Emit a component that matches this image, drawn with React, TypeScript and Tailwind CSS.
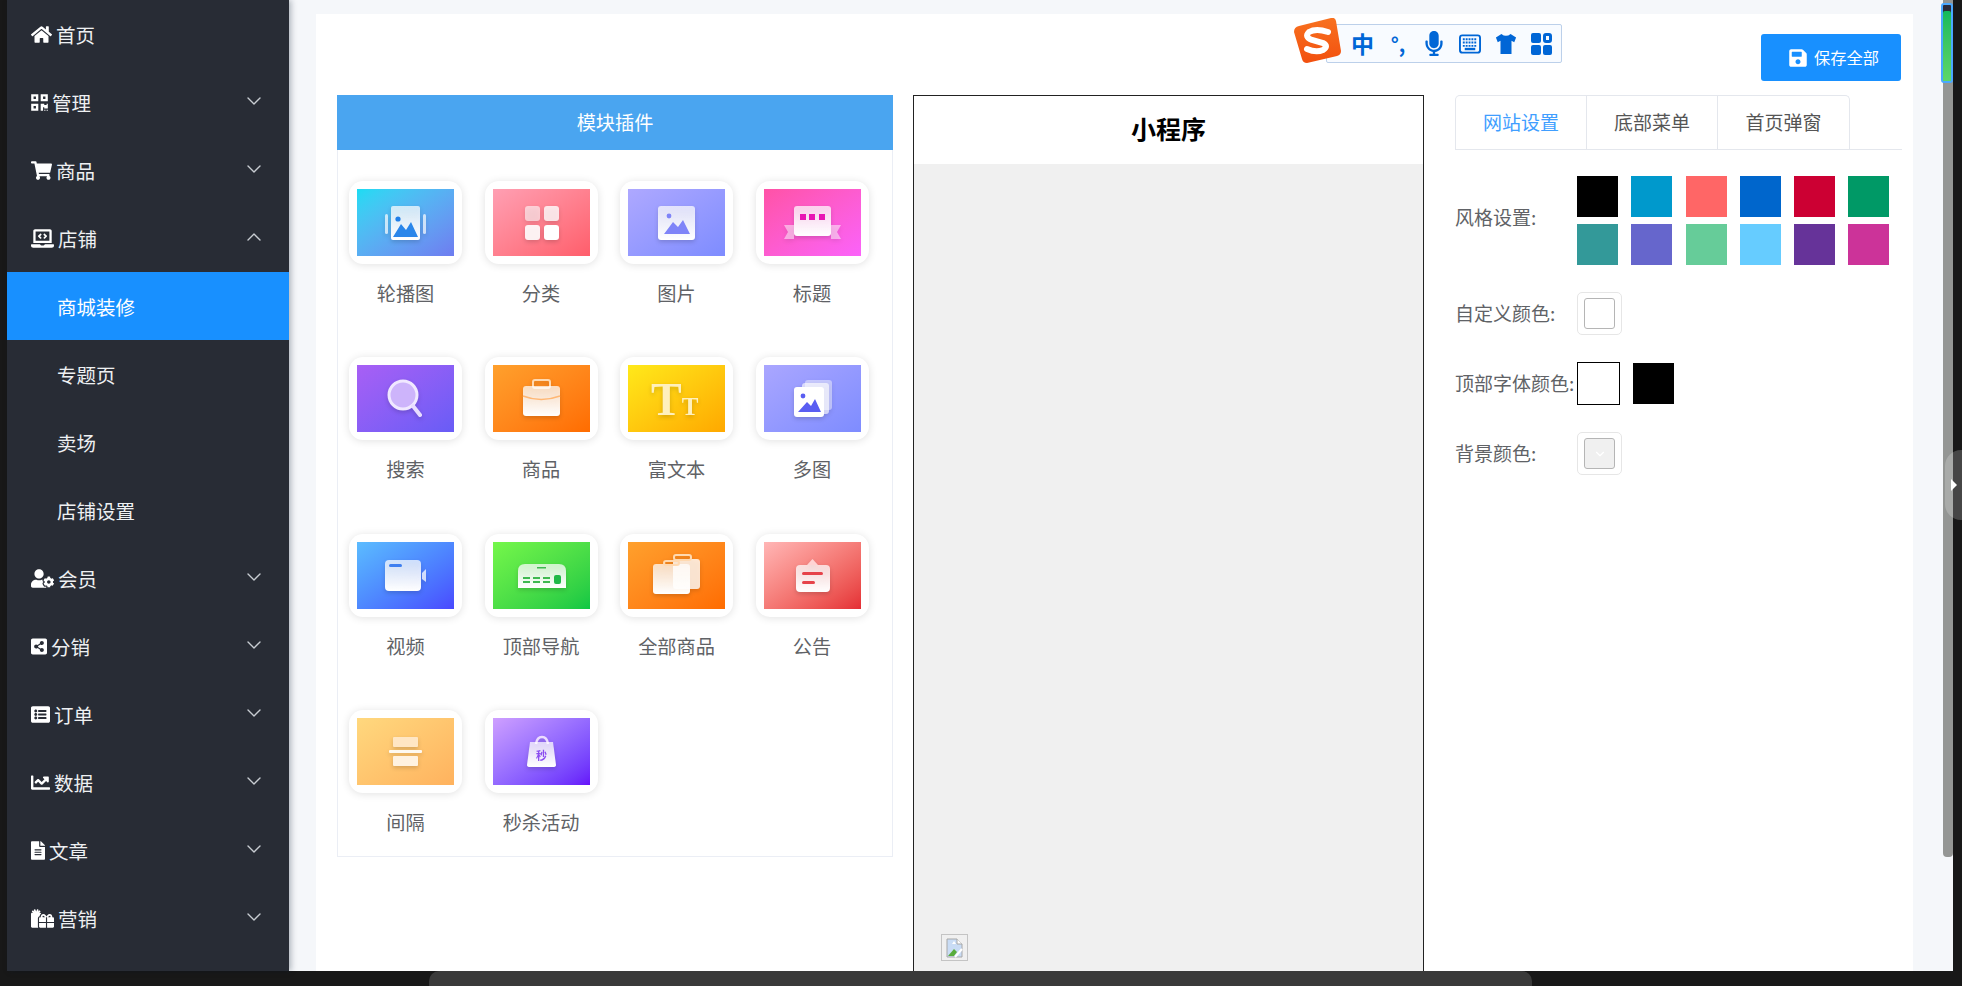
import { ReactNode } from 'react'
import { ChevronDown, ChevronUp } from 'lucide-react'
import {
  FaChartLine,
  FaFileAlt,
  FaGifts,
  FaHome,
  FaLaptopCode,
  FaListAlt,
  FaMicrophone,
  FaQrcode,
  FaSave,
  FaShareAltSquare,
  FaShoppingCart,
  FaUserCog,
} from 'react-icons/fa'

const navBottom = [
  { label: '会员', icon: FaUserCog, w: 'w-[23px]' },
  { label: '分销', icon: FaShareAltSquare, w: 'w-[16px]' },
  { label: '订单', icon: FaListAlt, w: 'w-[19px]' },
  { label: '数据', icon: FaChartLine, w: 'w-[19px]' },
  { label: '文章', icon: FaFileAlt, w: 'w-[14px]' },
  { label: '营销', icon: FaGifts, w: 'w-[23px]' },
]

const NavRow = ({ label, icon: Icon, w, arrow = true, open = false }: any) => (
  <div className="h-[68px] flex items-center pl-[24px] pr-[23px] text-[19.5px] text-[#eef0f2]">
    <Icon className={`h-[19px] shrink-0 text-white ${w}`} />
    <span className="ml-[4px] pt-[1px] flex-1">{label}</span>
    {arrow && (open
      ? <ChevronUp size={24} strokeWidth={1.4} className="mb-[2px] text-[#c8ccd2]" />
      : <ChevronDown size={24} strokeWidth={1.4} className="mb-[2px] text-[#c8ccd2]" />)}
  </div>
)

const SubRow = ({ label, active = false }: { label: string; active?: boolean }) => (
  <div className={`h-[68px] flex items-center pl-[50px] pt-[1px] text-[19.5px] text-[#eef0f2] ${active ? 'bg-[#1890ff] text-white' : ''}`}>
    {label}
  </div>
)

const Sidebar = () => (
  <aside className="w-[282px] shrink-0 bg-[#282c35] relative z-10 shadow-[2px_0_6px_rgba(0,21,41,0.3)]">
    <NavRow label="首页" icon={FaHome} w="w-[21px]" arrow={false} />
    <NavRow label="管理" icon={FaQrcode} w="w-[17px]" />
    <NavRow label="商品" icon={FaShoppingCart} w="w-[21px]" />
    <NavRow label="店铺" icon={FaLaptopCode} w="w-[23px]" open />
    <SubRow label="商城装修" active />
    <SubRow label="专题页" />
    <SubRow label="卖场" />
    <SubRow label="店铺设置" />
    {navBottom.map(item => <NavRow key={item.label} {...item} />)}
  </aside>
)

// the plugin tile drawings, all in a 97x67 box
const W = 'url(#tile-w)'
const icons: Record<string, ReactNode> = {
  轮播图: (
    <>
      <rect x="28" y="25" width="3" height="20" rx="1.5" fill="#fff" opacity=".7" />
      <rect x="66" y="25" width="3" height="20" rx="1.5" fill="#fff" opacity=".7" />
      <rect x="34" y="17" width="29" height="34" rx="2" fill={W} />
      <circle cx="41" cy="30" r="2.6" fill="#1f7fe8" />
      <path d="M36 48 L44 35 L49 41 L54 33 L61 48 Z" fill="#2a86ea" />
    </>
  ),
  分类: (
    <>
      <rect x="32" y="17" width="15" height="15" rx="3" fill="#fff" opacity=".6" />
      <rect x="51" y="17" width="15" height="15" rx="3" fill="#fff" opacity=".8" />
      <rect x="32" y="36" width="15" height="15" rx="3" fill="#fff" opacity=".9" />
      <rect x="51" y="36" width="15" height="15" rx="3" fill="#fff" />
    </>
  ),
  图片: (
    <>
      <rect x="30" y="17" width="37" height="34" rx="3" fill={W} />
      <circle cx="41" cy="27" r="2.4" fill="#7f84f8" />
      <path d="M36 45 L45 33 L50 38 L55 31 L62 45 Z" fill="#7f84f8" />
    </>
  ),
  标题: (
    <>
      <path d="M20 36 L30 36 L30 50 L20 50 L24 43 Z" fill="#fff" opacity=".5" />
      <path d="M77 36 L67 36 L67 50 L77 50 L73 43 Z" fill="#fff" opacity=".5" />
      <rect x="30" y="17" width="37" height="30" rx="3" fill={W} />
      <rect x="36" y="25" width="6" height="6" fill="#e815b4" />
      <rect x="45" y="25" width="6" height="6" fill="#e815b4" />
      <rect x="55" y="25" width="6" height="6" fill="#e815b4" />
    </>
  ),
  搜索: (
    <>
      <circle cx="46" cy="30" r="14" fill="#cdb4fb" stroke="#f0e8ff" strokeWidth="3" />
      <path d="M56 41 L63 50" stroke="#e8dcff" strokeWidth="4" strokeLinecap="round" />
    </>
  ),
  商品: (
    <>
      <rect x="40" y="15" width="17" height="8" rx="2" fill="none" stroke="#ffd9b0" strokeWidth="2" />
      <rect x="30" y="21" width="37" height="30" rx="3" fill={W} />
      <path d="M30 31 Q48 38 67 31" fill="none" stroke="#ffb774" strokeWidth="1.5" />
    </>
  ),
  富文本: (
    <text x="23" y="50" fontFamily="'Liberation Serif', serif" fontWeight="700" fill="#fff0bd">
      <tspan fontSize="46">T</tspan>
      <tspan fontSize="25">T</tspan>
    </text>
  ),
  多图: (
    <>
      <rect x="41" y="15" width="27" height="30" rx="3" fill="#fff" opacity=".45" />
      <rect x="38" y="18" width="27" height="31" rx="3" fill="#fff" opacity=".65" />
      <rect x="30" y="22" width="30" height="30" rx="3" fill="#fff" />
      <circle cx="39" cy="31" r="2.4" fill="#5a5ef2" />
      <path d="M34 47 L43 37 L47 41 L51 34 L57 47 Z" fill="#5a5ef2" />
    </>
  ),
  视频: (
    <>
      <rect x="28" y="18" width="36" height="31" rx="4" fill={W} />
      <rect x="32" y="22" width="13" height="3" rx="1.5" fill="#3e7ff0" />
      <path d="M65 31 L69 27 L69 40 L65 37 Z" fill="#fff" opacity=".75" />
    </>
  ),
  顶部导航: (
    <>
      <path d="M25 46 L25 29 Q25 22 32 22 L66 22 Q73 22 73 29 L73 46 Z" fill={W} />
      <rect x="44" y="25" width="9" height="1.5" fill="#3eb84f" />
      <rect x="30" y="35" width="7" height="2" fill="#3eb84f" />
      <rect x="30" y="39" width="7" height="2" fill="#3eb84f" />
      <rect x="40" y="35" width="7" height="2" fill="#3eb84f" />
      <rect x="40" y="39" width="7" height="2" fill="#3eb84f" />
      <rect x="50" y="35" width="7" height="2" fill="#3eb84f" />
      <rect x="50" y="39" width="7" height="2" fill="#3eb84f" />
      <rect x="61" y="33" width="7" height="9" rx="2" fill="#1fb847" />
    </>
  ),
  全部商品: (
    <>
      <rect x="45" y="17" width="27" height="30" rx="3" fill="#fff" opacity=".8" />
      <rect x="46" y="13" width="17" height="5" rx="2" fill="none" stroke="#ffd9b0" strokeWidth="2" />
      <rect x="25" y="22" width="37" height="30" rx="3" fill={W} />
      <rect x="36" y="19" width="15" height="4" rx="2" fill="none" stroke="#ffd9b0" strokeWidth="2" />
    </>
  ),
  公告: (
    <>
      <path d="M43 23 L48.5 17 L54 23 Z" fill="#ffd3d3" />
      <rect x="32" y="23" width="34" height="27" rx="4" fill={W} />
      <rect x="38" y="30" width="21" height="3" rx="1.5" fill="#e6434a" />
      <rect x="38" y="39" width="13" height="3" rx="1.5" fill="#e6434a" />
    </>
  ),
  间隔: (
    <>
      <rect x="36" y="19" width="25" height="10" rx="1" fill="#ffe6c4" />
      <rect x="32" y="32" width="33" height="3" rx="1" fill="#fff" opacity=".9" />
      <rect x="36" y="38" width="25" height="10" rx="1" fill="#fff2e0" />
    </>
  ),
  秒杀活动: (
    <>
      <path d="M43 26 Q44 19 49 19 Q54 19 55 26" fill="none" stroke="#ecdcff" strokeWidth="2.5" />
      <path d="M37 24 L60 24 L63 47 Q63 49 60 49 L37 49 Q34 49 34 47 Z" fill={W} />
      <text x="48.5" y="42" textAnchor="middle" fontSize="11" fontWeight="700" fill="#8a4cf0" fontFamily="'Noto Sans CJK SC', sans-serif">秒</text>
    </>
  ),
}

const plugins = [
  { label: '轮播图', bg: 'from-[#17dcf3] to-[#6e7cf0]' },
  { label: '分类', bg: 'from-[#ff9fb3] to-[#ff5d6b]' },
  { label: '图片', bg: 'from-[#aea8ff] to-[#7e8cff]' },
  { label: '标题', bg: 'from-[#ff52a6] to-[#fb62fa]' },
  { label: '搜索', bg: 'from-[#a85ff5] to-[#685cf6]' },
  { label: '商品', bg: 'from-[#ffa02c] to-[#ff6c00]' },
  { label: '富文本', bg: 'from-[#ffe91a] to-[#ffa800]' },
  { label: '多图', bg: 'from-[#aaa6ff] to-[#7e8cff]' },
  { label: '视频', bg: 'from-[#5cbcff] to-[#4a48ff]' },
  { label: '顶部导航', bg: 'from-[#74f74a] to-[#0ac744]' },
  { label: '全部商品', bg: 'from-[#ffa02c] to-[#ff6c00]' },
  { label: '公告', bg: 'from-[#ffb6b6] to-[#e42c34]' },
  { label: '间隔', bg: 'from-[#ffd87e] to-[#ffb25e]' },
  { label: '秒杀活动', bg: 'from-[#cf9fff] to-[#660cfa]' },
]

const PluginPanel = () => (
  <section className="w-[556px] shrink-0 h-[762px] flex flex-col">
    <div className="h-[55px] bg-[#4aa5f0] text-white text-[19.2px] flex items-center justify-center">模块插件</div>
    <div className="flex-1 border-x border-b border-[#ebeef5] pl-[11px] pt-[31px] grid grid-cols-[repeat(4,135.5px)] auto-rows-[128px] gap-y-[48.4px] content-start">
      {plugins.map(p => (
        <div key={p.label} className="w-[113px] flex flex-col items-center">
          <div className="w-[113px] h-[83px] bg-white rounded-[14px] p-[8px] shadow-[0_1px_8px_rgba(0,0,0,0.12)]">
            <div className={`h-[67px] bg-linear-to-br ${p.bg}`}>
              <svg viewBox="0 0 97 67" className="w-full h-full drop-shadow-[0_2px_2px_rgba(0,0,0,0.16)]">
                {icons[p.label]}
              </svg>
            </div>
          </div>
          <div className="mt-[13px] h-[32px] leading-[32px] text-[19.2px] text-[#606266] whitespace-nowrap">{p.label}</div>
        </div>
      ))}
    </div>
  </section>
)

const Phone = () => (
  <section className="w-[511px] shrink-0 h-[1000px] mr-[11px] border border-[#222] flex flex-col">
    <div className="h-[68px] pb-[2px] flex items-center justify-center text-[25px] font-bold text-black">小程序</div>
    <div className="flex-1 bg-[#f0f0f0] pt-[770px] pl-[27px]">
      <div className="w-[27px] h-[27px] border border-[#c4c4c4] flex items-center justify-center">
        <svg width="17" height="20" viewBox="0 0 17 20">
          <path d="M1 1 H11 L16 6 V19 H1 Z" fill="#c9dcf5" stroke="#a8a8a8" />
          <path d="M11 1 V6 H16" fill="#fff" stroke="#a8a8a8" />
          <path d="M2 18 L8 11 L11 14 L8 18 Z" fill="#58ad3c" />
          <path d="M6 6 L8 3 L10 6 Z" fill="#fff" />
          <path d="M9 19 L16 11" stroke="#fff" strokeWidth="2" />
        </svg>
      </div>
    </div>
  </section>
)

const swatches = [
  '#000000', '#0099cc', '#ff6666', '#0066cc', '#cc0033', '#009966',
  '#339999', '#6666cc', '#66cc99', '#66ccff', '#663399', '#cc3399',
]

const Picker = ({ fill = 'bg-white', arrow = false }: { fill?: string; arrow?: boolean }) => (
  <div className="w-[45px] h-[43px] border border-[#e6e6e6] rounded-[5px] flex items-center justify-center">
    <div className={`w-[31px] h-[31px] border border-[#b5b5b5] rounded-[3px] flex items-center justify-center ${fill}`}>
      {arrow && <ChevronDown size={14} className="text-white" />}
    </div>
  </div>
)

const FormRow = ({ label, nudge = '', children }: { label: string; nudge?: string; children: ReactNode }) => (
  <div className="flex items-center">
    <span className={`w-[122px] shrink-0 text-[19px] text-[#606266] whitespace-nowrap ${nudge}`}>{label}</span>
    {children}
  </div>
)

const Settings = () => (
  <section className="w-[447px] shrink-0">
    <div className="h-[55px] border-b border-[#e4e7ed] flex">
      <div className="flex border border-b-0 border-[#e4e7ed] rounded-t-[5px] text-[19px] text-[#555]">
        <div className="w-[130px] flex items-center justify-center text-[#409eff]">网站设置</div>
        <div className="w-[131px] flex items-center justify-center border-l border-[#e4e7ed]">底部菜单</div>
        <div className="w-[132px] flex items-center justify-center border-l border-[#e4e7ed]">首页弹窗</div>
      </div>
    </div>
    <div className="mt-[26px] flex flex-col gap-[27px]">
      <FormRow label="风格设置:" nudge="mb-[7px]">
        <div className="grid grid-cols-[repeat(6,41px)] gap-x-[13.3px] gap-y-[7px]">
          {swatches.map(c => <div key={c} className="h-[41px]" style={{ backgroundColor: c }} />)}
        </div>
      </FormRow>
      <FormRow label="自定义颜色:"><Picker /></FormRow>
      <FormRow label="顶部字体颜色:">
        <div className="flex items-center gap-[13px]">
          <div className="w-[43px] h-[43px] border border-black bg-white" />
          <div className="w-[41px] h-[41px] bg-black" />
        </div>
      </FormRow>
      <FormRow label="背景颜色:"><Picker fill="bg-[#f0f0f0]" arrow /></FormRow>
    </div>
  </section>
)

// the input-method toolbar that floats over the page
const ImeBar = () => (
  <div className="absolute left-[1294px] top-[18px] h-[45px] flex items-end text-[#0066d6] z-20">
    <div className="ml-[32px] w-[236px] h-[39px] bg-[#f8fbff] border border-[#bcd0ea] rounded-[2px] flex items-center pl-[24px] gap-[14px]">
      <span className="w-[22px] text-center text-[23px] font-bold leading-none">中</span>
      <span className="w-[22px] text-center text-[20px] font-bold leading-none">°,</span>
      <span className="w-[22px] flex justify-center"><FaMicrophone size={25} /></span>
      <span className="w-[22px] flex justify-center">
        <svg width="23" height="20" viewBox="0 0 23 20">
          <rect x="1" y="1" width="21" height="18" rx="2.5" fill="none" stroke="currentColor" strokeWidth="2" />
          <path d="M4 5h15M4 8.5h15M4 12h15" stroke="currentColor" strokeWidth="2" strokeDasharray="2 1" />
          <rect x="6" y="14" width="11" height="2.5" fill="currentColor" />
        </svg>
      </span>
      <span className="w-[22px] flex justify-center">
        <svg width="24" height="24" viewBox="0 0 24 24">
          <path d="M7 1 L1 5 L3 10 L6 8.5 V23 H18 V8.5 L21 10 L23 5 L17 1 Q12 5 7 1 Z" fill="currentColor" />
        </svg>
      </span>
      <span className="w-[21px] grid grid-cols-2 gap-[2px]">
        <i className="h-[10px] bg-[#0066d6] rounded-[2px]" />
        <i className="h-[10px] border-[3px] border-[#0066d6] rounded-[3px]" />
        <i className="h-[10px] bg-[#0066d6] rounded-[2px]" />
        <i className="h-[10px] bg-[#0066d6] rounded-[2px]" />
      </span>
    </div>
    <svg width="47" height="45" viewBox="0 0 47 45" className="absolute left-0 top-0">
      <defs>
        <linearGradient id="ime-logo" x1="0" y1="0" x2="0" y2="1">
          <stop offset="0" stopColor="#f8711f" />
          <stop offset="1" stopColor="#f2500f" />
        </linearGradient>
      </defs>
      <path d="M5 8 L37 0 Q41 -1 42 3 L47 33 Q47 37 43 38 L13 45 Q9 45 8 41 L0 14 Q0 9 5 8 Z" fill="url(#ime-logo)" />
      <path d="M34 14 Q22 10 15 14 Q10 19 18 22 L29 25 Q35 28 29 32 Q22 35 13 31" fill="none" stroke="#fff" strokeWidth="6" strokeLinecap="round" />
    </svg>
  </div>
)

export default function App() {
  return (
    <div className="relative h-[986px] w-full overflow-hidden flex flex-col bg-[#181818] font-['Noto_Sans_CJK_SC','Liberation_Sans',sans-serif]">
      <svg className="absolute w-0 h-0">
        <defs>
          <linearGradient id="tile-w" x1="0" y1="0" x2="0" y2="1">
            <stop offset="0" stopColor="#fff" stopOpacity=".72" />
            <stop offset="1" stopColor="#fff" />
          </linearGradient>
        </defs>
      </svg>

      <div className="flex h-[971px]">
        <div className="w-[7px] shrink-0 bg-[#181818]" />
        <Sidebar />
        <main className="flex-1 bg-[#f5f7fa] pt-[14px] pl-[27px] pr-[40px] overflow-hidden">
          <div className="h-full bg-white pl-[21px] pr-[12px] pt-[20px] overflow-hidden">
            <div className="flex justify-end">
              <button className="w-[140px] h-[47px] pl-[5px] bg-[#1890ff] rounded-[3px] text-white text-[16.25px] flex items-center justify-center gap-[6px]">
                <FaSave size={20} />
                保存全部
              </button>
            </div>
            <div className="mt-[14px] flex items-start gap-[20px]">
              <PluginPanel />
              <Phone />
              <Settings />
            </div>
          </div>
        </main>
        <div className="w-[9px] shrink-0 bg-[#181818]" />
      </div>

      <div className="h-[15px] pl-[429px] bg-[#181818]">
        <div className="w-[1103px] h-full bg-[#3a3a3a] rounded-t-[10px]" />
      </div>

      <ImeBar />

      {/* page scrollbar, the extension's green thumb and the side handle */}
      <div className="absolute left-[1943px] top-0 w-[10px] h-[857px] bg-[#949694] rounded-b-[4px] z-20" />
      <div className="absolute left-[1941px] top-[3px] w-[12px] h-[80px] border-2 border-[#4aa8ff] rounded-[3px] bg-[#2b2b3a] pt-[6px] z-30">
        <div className="h-full bg-linear-to-b from-[#10b95c] to-[#5cd76a] rounded-t-[2px]" />
      </div>
      <div className="absolute left-[1945px] top-[450px] w-[17px] h-[70px] bg-white/20 rounded-l-[16px] z-20 flex items-center pl-[6px]">
        <div className="w-0 h-0 border-y-[6px] border-y-transparent border-l-[6px] border-l-white" />
      </div>
    </div>
  )
}
